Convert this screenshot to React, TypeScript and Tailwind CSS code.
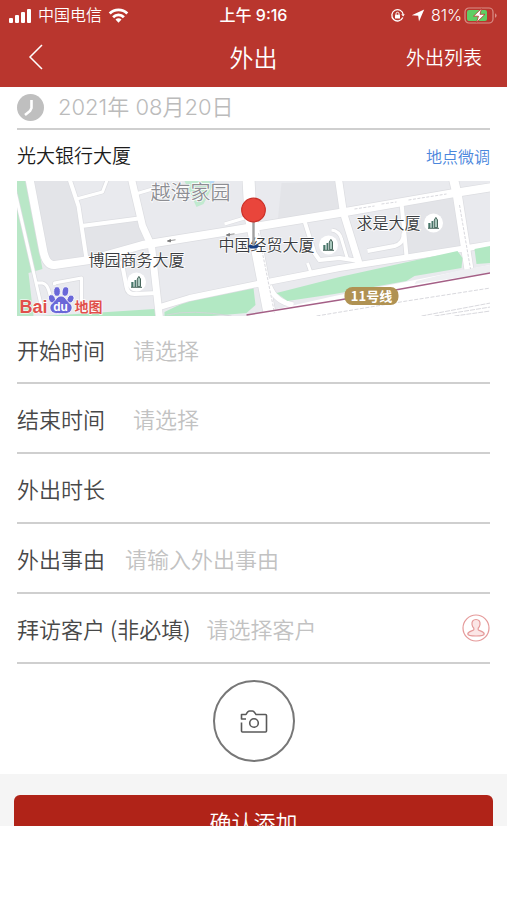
import React, { useState } from "react";

const roads = [
	{ d: "M-3 4 L26 130", w: 3 },
	{ d: "M13 -2 L26 66 Q29 85 38 84 L73 79 L126 64 L163 58 L213 50 L323 32 L438 12 L476 6", w: 8 },
	{ d: "M115 -2 L126 45 L135 65 L143 137", w: 7 },
	{ d: "M53 -2 L62 25 L70 78", w: 4 },
	{ d: "M60 18 L86 11 L91 -2", w: 3 },
	{ d: "M65 45 L126 37", w: 4 },
	{ d: "M119 13 L136 8", w: 3 },
	{ d: "M105 80 L110 106 Q111 113 118 113 L142 112", w: 4 },
	{ d: "M20 102 H26 Q31 103 33 112 L36 122", w: 3 },
	{ d: "M38 104 V102 L65 97 V122", w: 3 },
	{ d: "M140 127 L173 117 L241 103 L323 87 L451 67 L476 63", w: 6 },
	{ d: "M232 -2 L234 35 L239 60 L254 137", w: 12 },
	{ d: "M208 43 L228 37", w: 3 },
	{ d: "M288 40 L298 72 L303 79 L323 77 L343 80", w: 4 },
	{ d: "M291 82 L295 93", w: 3 },
	{ d: "M322 -2 L327 32 L343 84", w: 7 },
	{ d: "M315 49 Q323 50 325 58 L331 78", w: 3 },
	{ d: "M385 22 L390 75", w: 4 },
	{ d: "M387 52 Q388 62 378 65 L351 70", w: 4 },
	{ d: "M437 -2 L441 15 L453 92", w: 9 },
	{ d: "M253 105 Q259 121 277 124", w: 5 },
];

const landmarks = [
	{ x: 120, y: 101 },
	{ x: 312, y: 64 },
	{ x: 417, y: 42 },
];

const fields = [
	{ key: "start", label: "开始时间", placeholder: "请选择", readOnly: true, gap: "ml-7" },
	{ key: "end", label: "结束时间", placeholder: "请选择", readOnly: true, gap: "ml-7" },
	{ key: "duration", label: "外出时长", placeholder: "", readOnly: true, gap: "ml-5" },
	{ key: "reason", label: "外出事由", placeholder: "请输入外出事由", readOnly: false, gap: "ml-5" },
	{ key: "customer", label: "拜访客户 (非必填)", placeholder: "请选择客户", readOnly: true, gap: "ml-4" },
];

const StatusBar = () => (
	<div className="grid h-[30px] grid-cols-[1fr_auto_1fr] items-center px-[9px] font-['Inter','Noto_Sans_CJK_SC',sans-serif] text-base leading-none">
		<div className="flex items-center gap-[6px]">
			<svg width="23" height="15" viewBox="0 0 23 15" fill="currentColor">
				<rect x="0" y="10" width="4" height="5" rx="1" />
				<rect x="6" y="7" width="4" height="8" rx="1" />
				<rect x="12" y="4" width="4" height="11" rx="1" />
				<rect x="18" y="1" width="4" height="14" rx="1" />
			</svg>
			<span>中国电信</span>
			<svg width="21" height="15" viewBox="0 0 20 15" fill="none" stroke="currentColor" strokeWidth="2.8">
				<path d="M1.2 5.6a12.4 12.4 0 0 1 17.6 0" />
				<path d="M4.6 9.2a7.6 7.6 0 0 1 10.8 0" />
				<path d="M10 14.8l-3-3.2a4.2 4.2 0 0 1 6 0z" fill="currentColor" stroke="none" />
			</svg>
		</div>
		<span className="font-medium">上午 9:16</span>
		<div className="flex items-center justify-end gap-[6px]">
			<svg width="15" height="15" viewBox="0 0 15 15" fill="none" stroke="currentColor" strokeWidth="1.3">
				<path d="M12.8 9.5a5.7 5.7 0 1 1 .4-3" />
				<path d="M11.2 6.2h3.6l-1.6 2.4z" fill="currentColor" stroke="none" />
				<rect x="5" y="6.8" width="5" height="3.6" rx="0.5" fill="currentColor" stroke="none" />
				<path d="M6 7V5.8a1.5 1.5 0 0 1 3 0V7" strokeWidth="1" />
			</svg>
			<svg width="14" height="13" viewBox="0 0 14 13" fill="currentColor">
				<path d="M13.2 0.6L8 12.6 7.2 6.8 0.8 6.2z" />
			</svg>
			<span>81%</span>
			<svg className="-ml-1" width="34" height="17" viewBox="0 0 34 17" fill="none">
				<rect x="1" y="1" width="28" height="15" rx="4" stroke="#d98f88" strokeWidth="1.2" />
				<path d="M31 6.2v4.6q1.6-.7 1.6-2.3T31 6.2z" fill="#d98f88" />
				<rect x="3" y="3" width="20" height="11" rx="2" fill="#5fcf64" />
				<path d="M17.5 1.5L9.5 9.2h5l-2 6.3 8.5-8.2h-5z" fill="#fff" stroke="#b9362e" strokeWidth="0.8" />
			</svg>
		</div>
	</div>
);

const LocationMap = () => (
	<svg
		className="block h-[135px] w-full font-['Noto_Sans_CJK_SC',sans-serif]"
		viewBox="0 0 474 135"
		preserveAspectRatio="xMidYMid slice"
		role="img"
		aria-label="地图"
	>
		<rect width="474" height="135" fill="#e9eaee" />
		<path d="M15 0H54L70 76L33 83Z M65 47L126 39L133 62L72 76Z M265 2L322 0L327 30L261 42Z M388 24L440 15L449 65L391 74Z" fill="#e3e4e8" />
		<path d="M0 0H10L26 88L12 92L17 135H0Z" fill="#b9e7c7" />
		<path d="M24 135L60 133L138 128L141 135Z M148 131L175 118L237 107L239 124L230 132L195 135H148Z" fill="#b2e8c3" />
		<path d="M168 0H198Q194 10 187 23L180 26Z" fill="#c1ead0" />
		<path d="M193 0h5l-3 7z" fill="#b8d8f8" />
		<g fill="none" stroke="#dcdde1" strokeLinejoin="round">
			{roads.map((road) => (
				<path key={road.d} d={road.d} strokeWidth={road.w + 1.4} />
			))}
		</g>
		<g fill="none" stroke="#fff" strokeLinejoin="round">
			{roads.map((road) => (
				<path key={road.d} d={road.d} strokeWidth={road.w} />
			))}
		</g>
		<path d="M230 135L318 115L474 84V135Z" fill="#fff" />
		<path d="M260 112L323 96L441 70L446 77L445 87L398 95L390 100L318 113L271 120Z M458 68L474 65V82L460 83Z" fill="#b2e8c3" />
		<path d="M400 100L445 89L474 84V92L398 103Z" fill="#eeeff2" />
		<g fill="none" stroke="#d4d4d9" strokeWidth="0.9">
			<path d="M300 135L390 120L474 107" strokeDasharray="4 1.5" />
			<path d="M405 135L474 122 M418 135L474 126 M438 135L474 130" strokeDasharray="5 1" />
			<path d="M242 52L258 132 M443 24L454 88 M338 28L358 25 M365 23L380 21 M392 19L430 13" strokeDasharray="3 1.5" />
			<path d="M150 134Q175 128 215 135" />
		</g>
		<path d="M230 134L323 119L474 92" fill="none" stroke="#a45f86" strokeWidth="1.5" />
		<g stroke="#777" strokeWidth="0.8" fill="#777">
			<path d="M151 60l8-1.2M151 60l3-1.500v2.500z" />
			<path d="M210 54l8-1.2M210 54l3-1.500v2.500z" />
		</g>
		{landmarks.map((mark) => (
			<g key={mark.x} transform={`translate(${mark.x} ${mark.y})`}>
				<circle r="9.5" fill="#fff" />
				<path d="M-5.200 5V0h2.200v5z M-2 5v-7h1.800v7z" fill="#48776a" />
				<path d="M0.800 4.600v-7.600l1.600-2.600 1.600 2.600v7.600z" fill="#a9c8bd" stroke="#48665c" strokeWidth="1" />
				<path d="M-5.500 5.300H5.500" stroke="#48665c" />
			</g>
		))}
		<text x="134" y="19" fontSize="20" fontWeight="350" fill="#8d8e93" stroke="#fff" strokeWidth="1.500" paintOrder="stroke">越海家园</text>
		<g fontSize="16" fill="#3a3c40" stroke="#fff" strokeWidth="1.500" paintOrder="stroke">
			<text x="72" y="85">博园商务大厦</text>
			<text x="202" y="70">中国经贸大厦</text>
			<text x="340" y="48">求是大厦</text>
		</g>
		<rect x="328" y="106" width="54" height="18" rx="8" fill="#b09252" />
		<text x="355" y="120" fontSize="13" fontWeight="700" fill="#fff" textAnchor="middle">11号线</text>
		<path d="M237 40V66" stroke="#a0a0a0" strokeWidth="2.4" />
		<path d="M231 65l3-1.500 3 1.500 3-1.500 3 1.500-3 2.600h-6z" fill="#173f83" />
		<circle cx="237" cy="29" r="11.8" fill="#e9453b" stroke="#cb3028" strokeWidth="1.2" />
		<g fill="#e0504c" stroke="#fff" strokeWidth="1.2" paintOrder="stroke" fontWeight="700">
			<text x="3" y="132" fontSize="18" fontFamily="Liberation Sans, sans-serif">Bai</text>
			<text x="58" y="131" fontSize="14">地图</text>
		</g>
		<g fill="#6a68d8" stroke="#fff" strokeWidth="0.8">
			<ellipse cx="35.500" cy="118" rx="3.300" ry="4.400" transform="rotate(-20 35 118)" />
			<ellipse cx="40.500" cy="110.500" rx="3.300" ry="4.800" />
			<ellipse cx="49" cy="110.500" rx="3.300" ry="4.800" transform="rotate(10 49 110)" />
			<ellipse cx="54" cy="118" rx="3.200" ry="4.200" transform="rotate(25 54 118)" />
			<path d="M44.500 115c4 0 5 4 8 6.500c3 2.500 4 5 2 8.500c-2 3-6 2.500-10 2.500s-8 .5-10-2.500c-2-3.500-1-6 2-8.500c3-2.500 4-6.500 8-6.500z" />
		</g>
		<text x="44" y="130" fontSize="12" fontWeight="700" fontFamily="Liberation Sans, sans-serif" fill="#fff" textAnchor="middle">du</text>
	</svg>
);

const App = () => {
	const [values, setValues] = useState<Record<string, string>>({});

	const handleChange = (key: string, value: string) => {
		setValues({ ...values, [key]: value });
	};

	return (
		<div className="min-h-screen bg-white font-['Noto_Sans_CJK_SC',sans-serif] font-[350]">
			<header className="bg-[#b9362e] text-white">
				<StatusBar />
				<nav className="grid h-[57px] grid-cols-[1fr_auto_1fr] items-center px-[25px] pb-[3px]">
					<button type="button" aria-label="返回" className="justify-self-start">
						<svg width="20" height="26" viewBox="0 0 20 26" fill="none" stroke="currentColor" strokeWidth="1.5">
							<path d="M17 1L5 13l12 12" />
						</svg>
					</button>
					<h1 className="text-2xl font-[350]">外出</h1>
					<a href="#list" className="justify-self-end text-[19px]">外出列表</a>
				</nav>
			</header>

			<main>
				<div className="px-[17px]">
					<div className="flex h-[43px] items-center gap-[14px] border-b-2 border-[#cfcfcf] font-['Inter','Noto_Sans_CJK_SC',sans-serif] text-[22px] text-[#bbb]">
						<svg width="27" height="27" viewBox="0 0 27 27" fill="none">
							<circle cx="13.500" cy="13.500" r="13.500" fill="#bfbfbf" />
							<path d="M14.500 6v8l-1.500 3-5 4" stroke="#fff" strokeWidth="2.600" />
						</svg>
						<time dateTime="2021-08-20">2021年 08月20日</time>
					</div>
					<div className="flex h-[51px] items-center justify-between">
						<span className="text-[19px] text-[#1c1c1c]">光大银行大厦</span>
						<a href="#adjust" className="text-base text-[#4a86dc]">地点微调</a>
					</div>
					<LocationMap />
					<form id="outing">
						{fields.map((field) => (
							<div key={field.key} className="flex h-[70px] items-center border-b-2 border-[#cfcfcf] text-[22px] first:h-[68px]">
								<label htmlFor={field.key} className="shrink-0 text-[#484848]">{field.label}</label>
								<input
									id={field.key}
									type="text"
									readOnly={field.readOnly}
									placeholder={field.placeholder}
									value={values[field.key] || ""}
									onChange={(e) => handleChange(field.key, e.target.value)}
									className={`${field.gap} min-w-0 flex-1 bg-transparent text-[#484848] outline-none placeholder:text-[#c2c2c2]`}
								/>
								{field.key === "customer" && (
									<button type="button" aria-label="选择客户" className="shrink-0">
										<svg width="28" height="28" viewBox="0 0 28 28" fill="none" stroke="#e59a9a" strokeWidth="1.200">
											<circle cx="14" cy="14" r="13" />
											<path d="M14 5.500c-3 0-4.300 2.200-4 5 .2 1.800 1 2.800 1.800 3.700v1.600c-.6 1.200-6 1.400-6 4.200 0 1.200 2 2 8.200 2s8.200-.8 8.200-2c0-2.800-5.400-3-6-4.200v-1.600c.8-.9 1.600-1.900 1.800-3.700.3-2.800-1-5-4-5z" fill="#fbe6e6" />
										</svg>
									</button>
								)}
							</div>
						))}
					</form>
				</div>
				<div className="flex justify-center pt-4 pb-3">
					<button type="button" aria-label="拍照" className="flex size-[82px] items-center justify-center rounded-full border-2 border-[#777]">
						<svg width="28" height="24" viewBox="0 0 28 24" fill="none" stroke="#595959" strokeWidth="1.600" strokeLinejoin="round">
							<path d="M6 10H1.500V5.500H6C7 3.500 8 2 9.500 2h3c1.500 0 2 1.500 3.500 3.500h9.500q1 0 1 1V22q0 1-1 1H2.500q-1 0-1-1v-8.500" />
							<circle cx="14" cy="14" r="4.300" />
						</svg>
					</button>
				</div>
			</main>

			<footer className="h-[52px] overflow-hidden bg-[#f5f5f5] px-[14px] pt-[21px]">
				<button type="submit" form="outing" className="block h-[52px] w-full rounded-md bg-[#b02318] text-[22px] text-white">
					确认添加
				</button>
			</footer>
		</div>
	);
};

export default App;
